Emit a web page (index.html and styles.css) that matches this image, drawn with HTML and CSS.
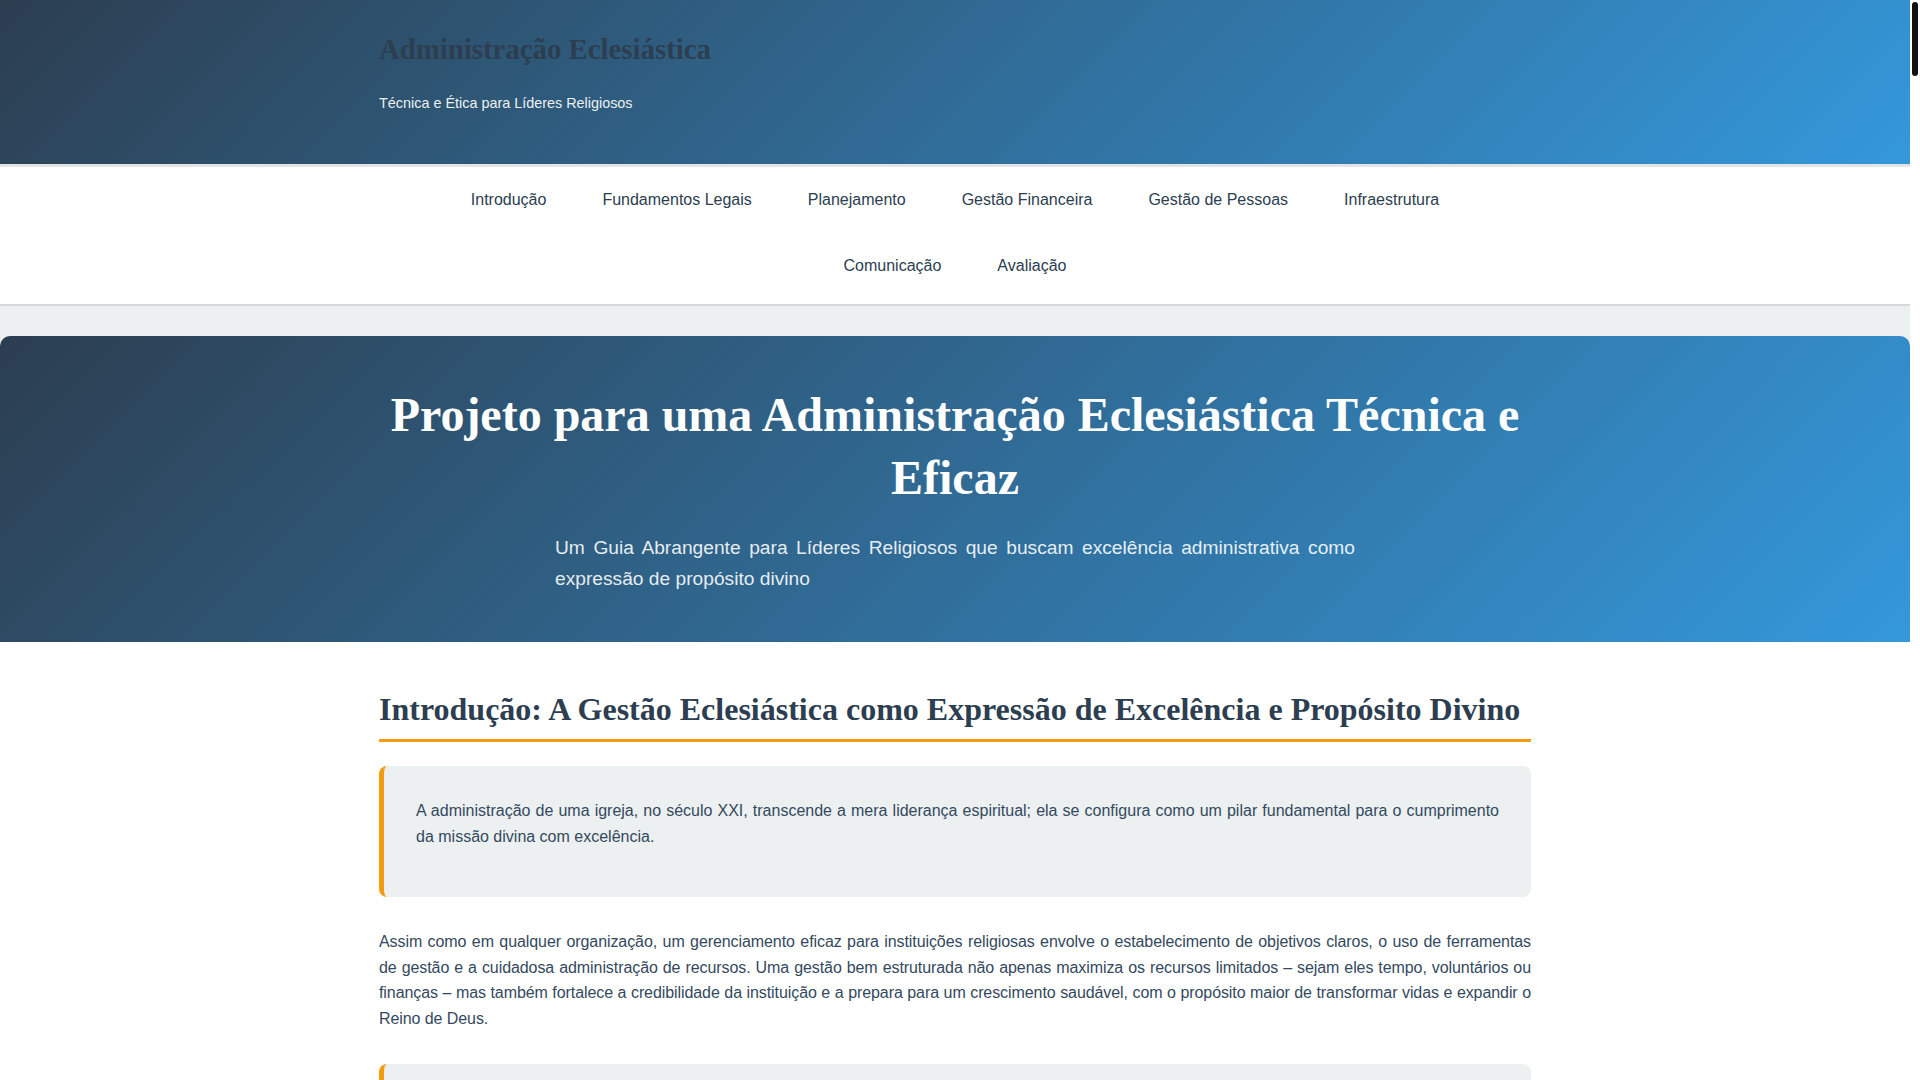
FILE: index.html
```html
<!DOCTYPE html>
<html lang="pt-BR">
<head>
<meta charset="utf-8">
<title>Administração Eclesiástica</title>
<link rel="stylesheet" href="styles.css">
</head>
<body>
<div class="scroll-thumb" aria-hidden="true"></div>
<header class="site-header">
  <div class="container">
    <h1 class="site-title">Administração Eclesiástica</h1>
    <p class="site-tagline">Técnica e Ética para Líderes Religiosos</p>
  </div>
</header>

<nav class="site-nav">
  <div class="container">
    <ul class="nav-list">
      <li><a href="#introducao">Introdução</a></li>
      <li><a href="#fundamentos">Fundamentos Legais</a></li>
      <li><a href="#planejamento">Planejamento</a></li>
      <li><a href="#financeira">Gestão Financeira</a></li>
      <li><a href="#pessoas">Gestão de Pessoas</a></li>
      <li><a href="#infraestrutura">Infraestrutura</a></li>
      <li><a href="#comunicacao">Comunicação</a></li>
      <li><a href="#avaliacao">Avaliação</a></li>
    </ul>
  </div>
</nav>

<section class="hero">
  <div class="container">
    <h1 class="hero-title">Projeto para uma Administração Eclesiástica Técnica e Eficaz</h1>
    <p class="hero-sub">Um Guia Abrangente para Líderes Religiosos que buscam excelência administrativa como expressão de propósito divino</p>
  </div>
</section>

<main class="content">
  <div class="container">
    <section id="introducao" class="section">
      <h2 class="section-title">Introdução: A Gestão Eclesiástica como Expressão de Excelência e Propósito Divino</h2>
      <div class="highlight">
        <p>A administração de uma igreja, no século XXI, transcende a mera liderança espiritual; ela se configura como um pilar fundamental para o cumprimento da missão divina com excelência.</p>
      </div>
      <p>Assim como em qualquer organização, um gerenciamento eficaz para instituições religiosas envolve o estabelecimento de objetivos claros, o uso de ferramentas de gestão e a cuidadosa administração de recursos. Uma gestão bem estruturada não apenas maximiza os recursos limitados – sejam eles tempo, voluntários ou finanças – mas também fortalece a credibilidade da instituição e a prepara para um crescimento saudável, com o propósito maior de transformar vidas e expandir o Reino de Deus.</p>
      <div class="highlight">
        <p>Este guia apresenta um projeto abrangente, estruturado em etapas, que combina princípios técnicos de administração com os valores éticos e espirituais que devem orientar toda liderança eclesiástica.</p>
        <p>Cada capítulo oferece fundamentos, ferramentas práticas e reflexões para que pastores, presbíteros, diáconos e líderes leigos possam conduzir suas comunidades com responsabilidade, transparência e fidelidade.</p>
      </div>
      <p>A boa administração não é um fim em si mesma, mas um meio de servir melhor às pessoas e de honrar a confiança depositada pela comunidade. Por isso, cada decisão administrativa deve ser tomada à luz da missão, da visão e dos valores da igreja.</p>
    </section>

    <section id="fundamentos" class="section">
      <h2 class="section-title">Fundamentos Legais da Organização Religiosa</h2>
      <p>A organização religiosa é uma pessoa jurídica de direito privado, e como tal deve observar a legislação civil, tributária, trabalhista e previdenciária aplicável. O estatuto social, as atas de assembleia e o registro em cartório são documentos essenciais para a segurança jurídica da instituição.</p>
      <div class="highlight">
        <p>Manter a documentação atualizada, a contabilidade regular e as obrigações acessórias em dia é uma expressão concreta de integridade e de bom testemunho perante a sociedade.</p>
      </div>
      <p>A imunidade tributária garantida às organizações religiosas não as dispensa da prestação de contas, da escrituração contábil e do cumprimento das obrigações relacionadas aos seus colaboradores.</p>
    </section>

    <section id="planejamento" class="section">
      <h2 class="section-title">Planejamento Estratégico</h2>
      <p>O planejamento estratégico permite à igreja definir com clareza sua missão, visão e valores, bem como estabelecer objetivos e metas mensuráveis para um horizonte de médio e longo prazo. Ferramentas como a análise SWOT, o ciclo PDCA e o plano de ação 5W2H são aliadas valiosas nesse processo.</p>
      <div class="highlight">
        <p>Planejar é exercer mordomia sobre o tempo e os recursos confiados à comunidade, antecipando desafios e oportunidades.</p>
      </div>
      <p>O envolvimento da liderança e dos membros na construção do plano gera compromisso, alinhamento e senso de pertencimento.</p>
    </section>

    <section id="financeira" class="section">
      <h2 class="section-title">Gestão Financeira e Transparência</h2>
      <p>A gestão financeira eclesiástica deve ser pautada pela transparência, pelo controle orçamentário e pela prestação de contas periódica. A elaboração de um orçamento anual, a separação entre recursos ordinários e designados e a existência de um conselho fiscal atuante são práticas recomendadas.</p>
      <div class="highlight">
        <p>Relatórios financeiros claros e acessíveis fortalecem a confiança dos membros e estimulam a generosidade.</p>
      </div>
      <p>Controles internos, como a dupla conferência das ofertas e a conciliação bancária mensal, protegem a instituição e as pessoas envolvidas.</p>
    </section>

    <section id="pessoas" class="section">
      <h2 class="section-title">Gestão de Pessoas e Voluntariado</h2>
      <p>Pessoas são o maior patrimônio da igreja. Recrutar, capacitar, acompanhar e reconhecer voluntários e colaboradores é tarefa essencial da liderança, que deve cuidar tanto do desempenho quanto do bem-estar de cada um.</p>
      <div class="highlight">
        <p>Uma cultura de cuidado, formação contínua e delegação responsável multiplica líderes e previne o esgotamento.</p>
      </div>
      <p>A descrição clara de funções e a definição de responsabilidades evitam sobreposições e conflitos.</p>
    </section>

    <section id="infraestrutura" class="section">
      <h2 class="section-title">Infraestrutura e Patrimônio</h2>
      <p>A conservação do templo, das salas e dos equipamentos exige planejamento de manutenção preventiva, inventário patrimonial atualizado e atenção às normas de segurança e acessibilidade.</p>
      <div class="highlight">
        <p>Espaços bem cuidados comunicam acolhimento e respeito a todos que chegam à comunidade.</p>
      </div>
      <p>Seguros, alvarás e laudos técnicos devem ser acompanhados com rigor pela administração.</p>
    </section>

    <section id="comunicacao" class="section">
      <h2 class="section-title">Comunicação Institucional</h2>
      <p>Uma comunicação eficaz, interna e externa, aproxima a igreja de seus membros e da sociedade. Canais oficiais, calendário integrado e identidade visual consistente contribuem para uma mensagem clara e coerente.</p>
      <div class="highlight">
        <p>Comunicar bem é também um ato de serviço e de testemunho.</p>
      </div>
      <p>O uso responsável das redes sociais e a proteção de dados pessoais são cuidados indispensáveis.</p>
    </section>

    <section id="avaliacao" class="section">
      <h2 class="section-title">Avaliação e Melhoria Contínua</h2>
      <p>Indicadores de desempenho, reuniões periódicas de avaliação e a escuta ativa da comunidade permitem corrigir rumos e celebrar conquistas, consolidando uma cultura de aprendizado e melhoria contínua.</p>
      <div class="highlight">
        <p>Avaliar não é julgar, mas buscar a excelência como expressão de fidelidade ao propósito divino.</p>
      </div>
      <p>Com disciplina, humildade e fé, a administração eclesiástica torna-se instrumento de edificação e de transformação.</p>
    </section>
  </div>
</main>
</body>
</html>
```

FILE: styles.css
```css
html {
  background: #ffffff;
}

body {
  margin: 0 10px 0 0;
  font-family: "Liberation Sans", Arial, sans-serif;
  font-size: 16px;
  line-height: 1.6;
  color: #34495e;
  background: #ecf0f1;
}

/* decorative scroll thumb in the right gutter */
.scroll-thumb {
  position: fixed;
  top: 2px;
  right: 2px;
  width: 6px;
  height: 74px;
  border-radius: 3px;
  background: #111111;
}

.container {
  max-width: 1200px;
  margin: 0 auto;
  padding: 0 24px;
  box-sizing: border-box;
}

/* Header */
.site-header {
  background: linear-gradient(135deg, #2c3e50 0%, #3498db 100%);
  padding: 26px 0 49px;
}

.site-title {
  margin: 0 0 20px;
  font-family: "Liberation Serif", "Times New Roman", serif;
  font-size: 28.8px;
  font-weight: bold;
  line-height: 46px;
  color: #2c3e50;
}

.site-tagline {
  margin: 0;
  font-size: 14.4px;
  line-height: 23px;
  color: #ecf0f1;
}

/* Navigation */
.site-nav {
  background: #ffffff;
  border-top: 3px solid #e3e4e5;
  border-bottom: 2px solid #d5d8dc;
  padding: 0 0 6px;
}

.nav-list {
  list-style: none;
  margin: 0;
  padding: 0;
  display: flex;
  flex-wrap: wrap;
  justify-content: center;
}

.nav-list a {
  display: block;
  padding: 20px 28px;
  line-height: 25.6px;
  font-size: 16px;
  color: #2c3e50;
  text-decoration: none;
}

/* Hero */
.hero {
  margin-top: 30px;
  background: linear-gradient(135deg, #2c3e50 0%, #3498db 100%);
  border-radius: 10px 10px 0 0;
  padding: 48px 0;
  color: #ffffff;
}

.hero-title {
  margin: 0 0 24px;
  font-family: "Liberation Serif", "Times New Roman", serif;
  font-size: 48px;
  line-height: 1.3;
  font-weight: bold;
  text-align: center;
}

.hero-sub {
  max-width: 800px;
  margin: 0 auto;
  font-size: 19.2px;
  line-height: 1.6;
  text-align: justify;
  color: rgba(255, 255, 255, 0.9);
}

/* Content */
.content {
  background: #ffffff;
  padding: 47px 0 48px;
}

.section {
  margin-bottom: 48px;
}

.section-title {
  margin: 0 0 24px;
  padding-bottom: 8px;
  border-bottom: 3px solid #f39c12;
  font-family: "Liberation Serif", "Times New Roman", serif;
  font-size: 32px;
  line-height: 1.3;
  font-weight: bold;
  color: #2c3e50;
}

.section p {
  margin: 0 0 16px;
  text-align: justify;
}

.section > p {
  letter-spacing: -0.08px;
}

.highlight {
  background: #ecf0f1;
  border-left: 5px solid #f39c12;
  border-radius: 8px;
  padding: 32px;
  margin: 0 0 32px;
}

.section p + .highlight {
  margin-top: 32px;
}
```
